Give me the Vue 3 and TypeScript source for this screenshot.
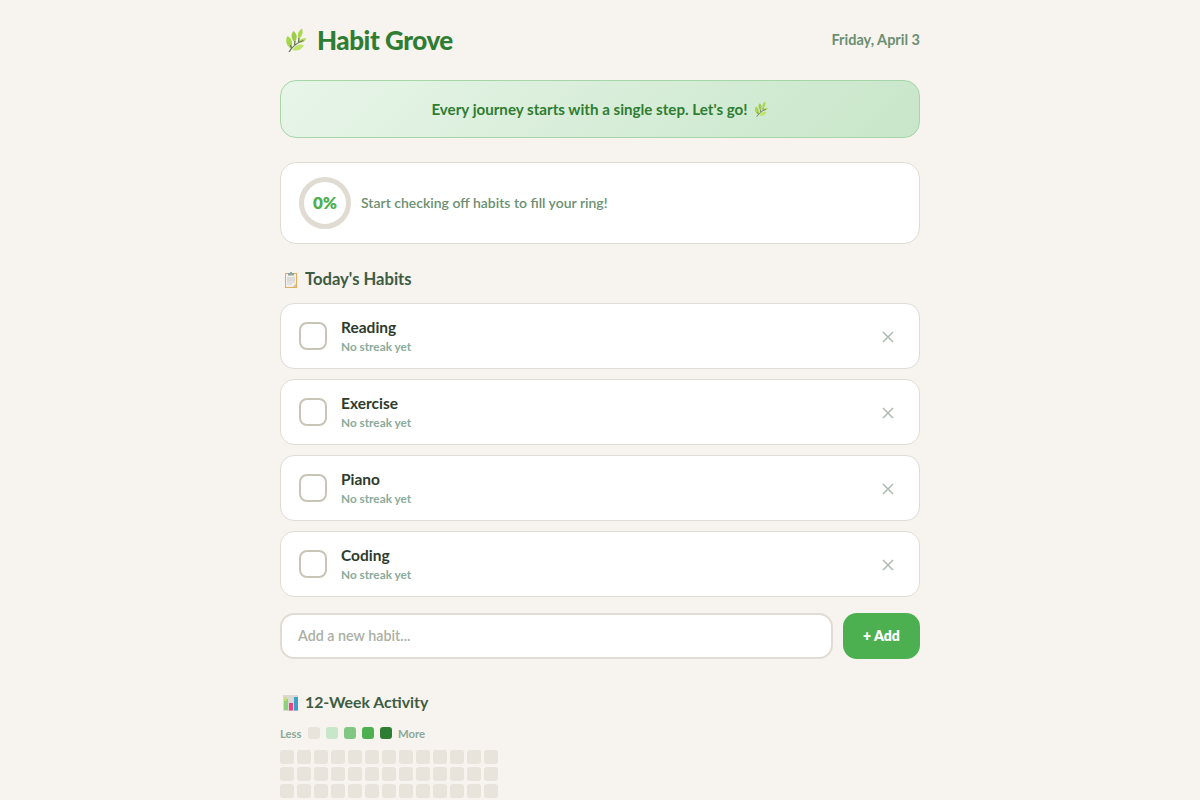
<script setup lang="ts">
const habits: string[] = ['Reading', 'Exercise', 'Piano', 'Coding']
const cells: number[] = Array.from({ length: 91 }, (_, i) => i)
const legend: string[] = ['#e8e4dc', '#c8e6c9', '#81c784', '#4caf50', '#2e7d32']
</script>

<template>
  <div class="page">
    <svg width="0" height="0" class="defs" aria-hidden="true">
      <symbol id="herb" viewBox="0 0 28 28">
        <path d="M7.5 10 C5 14 6 19 10.5 22.5 C13.5 18 12.5 13 7.5 10 Z" fill="#a5d64c" />
        <path d="M13.5 5 C10.5 8.5 11 12.5 14.5 16.5 C17.5 12.5 17.5 8.5 13.5 5 Z" fill="#9ccc4a" />
        <path d="M22 2.5 C18 5 17 9 18.5 13 C22 10.5 23.5 7 22 2.5 Z" fill="#a8d850" />
        <path d="M26.5 12.5 C23 11.5 19.5 13 18 16.5 C21.5 17.5 24.5 16 26.5 12.5 Z" fill="#b5de5c" />
        <path d="M24 19 C19.5 17.5 15 19 12.5 24 C17 25.5 21.5 24 24 19 Z" fill="#bde568" />
        <path d="M9 26 C12 21 17 16.5 23.5 14.5 M11.5 22.5 L10.5 19 M14.5 19 L15 15 M18.5 16 L19 12" stroke="#6d7a58" stroke-width="1.3" fill="none" />
      </symbol>
    </svg>

    <header class="top">
      <h1 class="brand">
        <svg class="herb-large" width="28" height="28"><use href="#herb" /></svg>
        <span>Habit Grove</span>
      </h1>
      <div class="date">Friday, April 3</div>
    </header>

    <div class="banner">
      <span>Every journey starts with a single step. Let's go!</span>
      <svg class="herb-small" width="18" height="18"><use href="#herb" /></svg>
    </div>

    <section class="ring-card">
      <div class="ring"><span>0%</span></div>
      <p class="ring-text">Start checking off habits to fill your ring!</p>
    </section>

    <h2 class="section-title today">
      <svg viewBox="0 0 20 20" width="20" height="20" aria-hidden="true">
        <rect x="5" y="4" width="12" height="15" fill="#e2ac5c" />
        <rect x="6" y="5" width="10" height="13" fill="#f3f1ec" />
        <rect x="7" y="8.5" width="8" height="1" fill="#c4c6c6" />
        <rect x="7" y="10.5" width="8" height="1" fill="#c4c6c6" />
        <rect x="7" y="12.5" width="8" height="1" fill="#d0d2d2" />
        <rect x="7" y="14.5" width="5" height="1" fill="#d0d2d2" />
        <path d="M12.5 18 L16 14.5 V18 Z" fill="#cfc9b4" />
        <rect x="8" y="4" width="6" height="2.5" fill="#8fa5a0" />
        <rect x="10" y="3" width="2" height="1.2" fill="#8fa5a0" />
      </svg>
      <span>Today's Habits</span>
    </h2>

    <ul class="habits">
      <li v-for="h in habits" :key="h" class="habit">
        <span class="check"></span>
        <div class="habit-body">
          <div class="habit-name">{{ h }}</div>
          <div class="habit-streak">No streak yet</div>
        </div>
        <svg class="remove" viewBox="0 0 12 12" width="12" height="12" aria-hidden="true">
          <path d="M1 1 L11 11 M11 1 L1 11" />
        </svg>
      </li>
    </ul>

    <form class="add-row" @submit.prevent>
      <input class="add-input" type="text" placeholder="Add a new habit..." />
      <button class="add-btn" type="submit"><span>+ Add</span></button>
    </form>

    <h2 class="section-title activity">
      <svg viewBox="0 0 20 20" width="20" height="20" aria-hidden="true">
        <rect x="3" y="4" width="15" height="16" fill="#d9d9d6" />
        <rect x="4" y="8" width="4" height="11" fill="#8fd07c" />
        <rect x="4.5" y="6" width="2" height="4" fill="#cfe06a" />
        <rect x="9" y="12" width="4" height="7.5" fill="#e8447f" />
        <rect x="14" y="6" width="4" height="13.5" fill="#3e9fcb" />
      </svg>
      <span>12-Week Activity</span>
    </h2>

    <div class="legend">
      <span class="less">Less</span>
      <i v-for="c in legend" :key="c" class="swatch" :style="{ background: c }"></i>
      <span>More</span>
    </div>

    <div class="grid">
      <i v-for="c in cells" :key="c" class="cell"></i>
    </div>
  </div>
</template>

<style>
html, body { margin: 0; background: #f7f3ee; }
</style>

<style scoped>
.page {
  width: 640px;
  margin: 0 auto;
  padding: 24px 0 40px;
  font-family: Lato, "Noto Sans", sans-serif;
  color: #2f4f36;
}
.defs { position: absolute; }
.top {
  display: flex;
  justify-content: space-between;
  align-items: center;
  height: 32px;
  margin-bottom: 24px;
}
.brand {
  display: flex;
  align-items: center;
  gap: 9px;
  margin: 0;
  font-size: 26px;
  font-weight: 900;
  letter-spacing: -0.45px;
  color: #2e7d32;
}
.date {
  padding-bottom: 1px;
  font-size: 14.5px;
  font-weight: 700;
  color: #6b8f71;
}
.banner {
  height: 56px;
  display: flex;
  align-items: center;
  justify-content: center;
  gap: 3px;
  border: 1px solid #a5d6a7;
  border-radius: 16px;
  background: linear-gradient(135deg, #e8f5e9, #c8e6c9);
  color: #2e7d32;
  font-size: 15.15px;
  font-weight: 700;
  margin-bottom: 24px;
}
.ring-card {
  display: flex;
  align-items: center;
  gap: 10px;
  height: 80px;
  padding: 0 18px;
  background: #fff;
  border: 1px solid #e0dcd3;
  border-radius: 16px;
  margin-bottom: 24px;
}
.ring {
  width: 52px;
  height: 52px;
  box-sizing: border-box;
  border: 5px solid #e0dcd3;
  border-radius: 50%;
  display: flex;
  align-items: center;
  justify-content: center;
  color: #4caf50;
  font-size: 17px;
  font-weight: 800;
}
.ring span { padding-bottom: 1px; }
.ring-text {
  margin: 0 0 2px;
  font-size: 14px;
  font-weight: 600;
  color: #6b8f71;
}
.section-title {
  display: flex;
  align-items: center;
  gap: 5px;
  margin: 0 0 13px;
  height: 22px;
  font-size: 16.6px;
  font-weight: 700;
  color: #3d5c43;
}
.section-title.activity {
  font-size: 15.8px;
  margin: 0 0 15px;
}
.habits {
  list-style: none;
  margin: 0 0 16px;
  padding: 0;
  display: flex;
  flex-direction: column;
  gap: 10px;
}
.habit {
  display: flex;
  align-items: center;
  height: 64px;
  padding: 0 25px 0 18px;
  background: #fff;
  border: 1px solid #e0dcd3;
  border-radius: 14px;
}
.check {
  width: 28px;
  height: 28px;
  box-sizing: border-box;
  border: 2.5px solid #c8c4b8;
  border-radius: 8px;
  margin-right: 14px;
}
.habit-body { flex: 1; }
.habit-name {
  font-size: 15.5px;
  font-weight: 700;
  color: #2d3b2d;
  line-height: 20px;
  margin-bottom: 2px;
}
.habit-streak {
  font-size: 11.8px;
  font-weight: 700;
  color: #8aaa9a;
  line-height: 16px;
}
.remove { margin-top: 2px; }
.remove path {
  stroke: #b0bdb5;
  stroke-width: 1.6;
  fill: none;
}
.add-row {
  display: flex;
  gap: 10px;
  margin-bottom: 31px;
}
.add-input {
  flex: 1;
  height: 46px;
  box-sizing: border-box;
  border: 2px solid #e0dcd3;
  border-radius: 14px;
  padding: 0 16px 2px;
  background: #fff;
  font: 600 14.3px Lato, "Noto Sans", sans-serif;
  outline: none;
}
.add-input::placeholder { color: #aab0a4; }
.add-btn {
  width: 77px;
  height: 46px;
  padding: 0 0 2px;
  border: 0;
  border-radius: 14px;
  background: #4caf50;
  color: #fff;
  font: 800 14px Lato, "Noto Sans", sans-serif;
}
.legend {
  display: flex;
  align-items: center;
  gap: 6px;
  height: 12px;
  font-size: 11.3px;
  font-weight: 700;
  color: #8aaa9a;
  margin-bottom: 11px;
}
.less { min-width: 22px; }
.swatch {
  width: 12px;
  height: 12px;
  border-radius: 3px;
}
.grid {
  display: grid;
  grid-template-columns: repeat(13, 14px);
  grid-auto-rows: 14px;
  gap: 3px;
}
.cell {
  background: #e8e4dc;
  border-radius: 3px;
}
</style>
